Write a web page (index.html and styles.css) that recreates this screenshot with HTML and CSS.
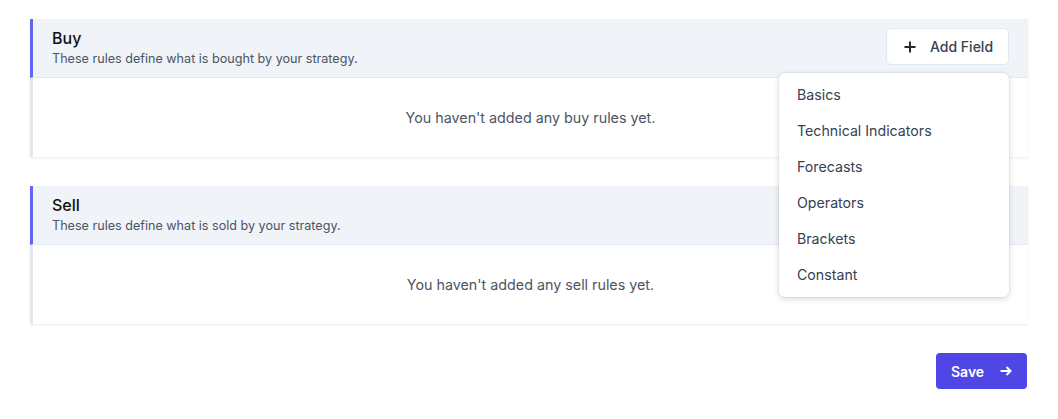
FILE: index.html
```html
<!DOCTYPE html>
<html>
<head>
<meta charset="utf-8">
<link rel="stylesheet" href="styles.css">
</head>
<body>
<div class="page">
  <section class="card">
    <div class="card-head">
      <div class="head-text">
        <h2 class="title">Buy</h2>
        <p class="subtitle">These rules define what is bought by your strategy.</p>
      </div>
      <div class="add-wrap">
        <button class="add-btn">
          <svg class="plus" width="12" height="12" viewBox="0 0 12 12"><path d="M6 0.5v11M0.5 6h11" stroke="#1f2937" stroke-width="2" fill="none"/></svg>
          <span>Add Field</span>
        </button>
        <ul class="menu">
          <li>Basics</li>
          <li>Technical Indicators</li>
          <li>Forecasts</li>
          <li>Operators</li>
          <li>Brackets</li>
          <li>Constant</li>
        </ul>
      </div>
    </div>
    <div class="card-body">You haven't added any buy rules yet.</div>
  </section>

  <section class="card">
    <div class="card-head">
      <div class="head-text">
        <h2 class="title">Sell</h2>
        <p class="subtitle">These rules define what is sold by your strategy.</p>
      </div>
    </div>
    <div class="card-body">You haven't added any sell rules yet.</div>
  </section>

  <div class="actions">
    <button class="save-btn">
      <span>Save</span>
      <svg width="12" height="10" viewBox="0 0 12 10"><path d="M0.5 5h10M6.5 1l4 4-4 4" stroke="#fff" stroke-width="2" fill="none"/></svg>
    </button>
  </div>
</div>
</body>
</html>
```

FILE: styles.css
```css
* { box-sizing: border-box; }
html, body { margin: 0; padding: 0; background: #fff; }
body { font-family: Inter, "Noto Sans", sans-serif; color: #111827; }
.page { padding: 19px 30px 0 30px; display: flex; flex-direction: column; gap: 29px; }
.card { background: #fff; box-shadow: 0 1px 2px rgba(0,0,0,0.08); }
.card-head {
  background: #f0f3f8;
  border-left: 3px solid #6366f1;
  border-bottom: 1px solid #e2e8f0;
  height: 59px;
  display: flex;
  justify-content: space-between;
  align-items: flex-start;
  padding: 0 19px 0 19px;
}
.head-text { padding-top: 9px; }
.title { margin: 0; font-size: 16px; font-weight: 500; line-height: 20px; color: #111; }
.subtitle { margin: 3px 0 0; font-size: 12.6px; line-height: 16px; color: #4b5563; }
.card-body {
  border-left: 3px solid #e2e8f0;
  height: 79px;
  display: flex;
  align-items: center;
  justify-content: center;
  font-size: 14.3px;
  color: #4b5563;
}
.add-wrap { position: relative; margin-top: 9px; }
.add-btn {
  display: flex; align-items: center; gap: 14px;
  height: 37px; width: 123px;
  padding: 0 0 0 17px;
  background: #fff;
  border: 1px solid #e2e8f0;
  border-radius: 5px;
  font-family: inherit; font-size: 14px; font-weight: 500; color: #374151;
}
.menu {
  position: absolute; top: 45px; right: 0;
  width: 230px; margin: 0; padding: 4px 0;
  list-style: none;
  background: #fff;
  border-radius: 6px;
  box-shadow: 0 2px 6px rgba(0,0,0,0.15), 0 0 0 1px rgba(0,0,0,0.04);
  z-index: 10;
}
.menu li { height: 36px; line-height: 36px; padding-left: 18px; font-size: 14.2px; color: #374151; }
.actions { display: flex; justify-content: flex-end; padding-right: 1px; }
.save-btn {
  display: flex; align-items: center; gap: 16px;
  height: 36px; width: 91px; padding: 0 0 0 15px;
  background: #4f46e5; color: #fff; border: 0; border-radius: 4px;
  font-family: inherit; font-size: 14px; font-weight: 600;
}
```
